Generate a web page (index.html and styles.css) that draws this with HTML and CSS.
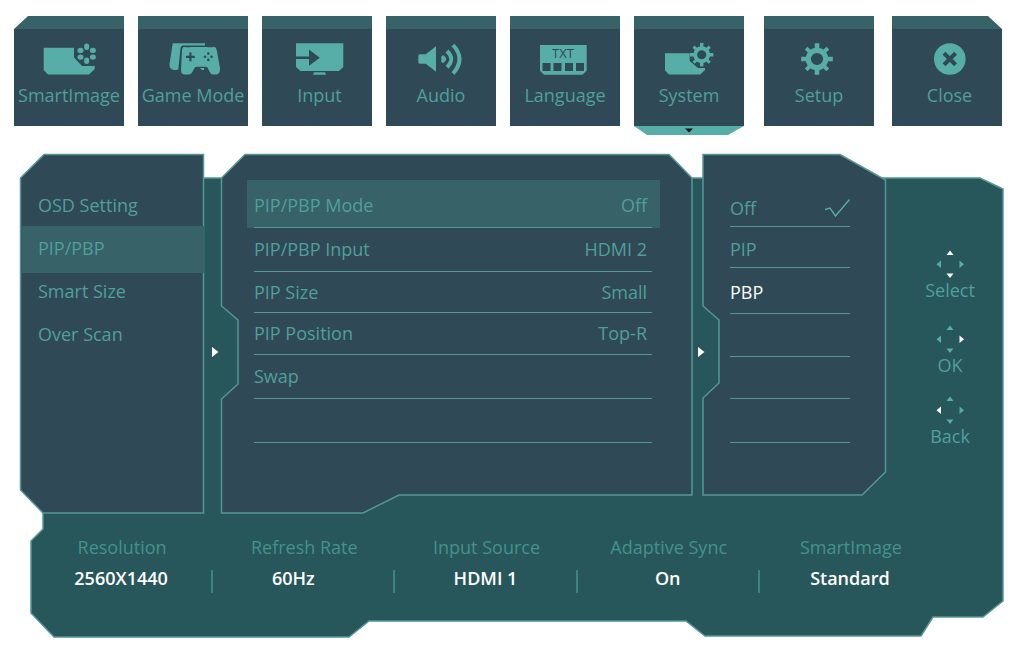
FILE: index.html
```html
<!DOCTYPE html>
<html lang="en">
<head>
<meta charset="utf-8">
<meta name="viewport" content="width=device-width, initial-scale=1">
<title>Monitor OSD</title>
<link rel="stylesheet" href="styles.css">
</head>
<body>
<svg class="defs" aria-hidden="true">
  <symbol id="gear" viewBox="-16 -16 32 32">
    <circle r="8.7" fill="none" stroke="currentColor" stroke-width="5.2"/>
    <path fill="currentColor" d="M-2.3-15.8H2.3V-10H-2.3zM-2.3 10H2.3V15.8H-2.3zM-15.8-2.3H-10V2.3H-15.8zM10-2.3H15.8V2.3H10z"/>
    <path fill="currentColor" transform="rotate(45)" d="M-2-15.3H2V-10H-2zM-2 10H2V15.3H-2zM-15.3-2H-10V2H-15.3zM10-2H15.3V2H10z"/>
  </symbol>
</svg>
<main class="osd">
  <nav class="tabs" aria-label="Main menu">
    <button class="tab tab-first" type="button">
      <svg class="tab-icon" viewBox="0 0 60 34" aria-hidden="true">
        <path d="M4.7 5.7H35V15.5L43 24H55.7V27L50 32.5H9L4.7 28z"/>
        <ellipse cx="47.7" cy="4.7" rx="2.6" ry="3.2"/><ellipse cx="47.7" cy="18.8" rx="2.6" ry="3.2"/>
        <ellipse cx="41.5" cy="8.4" rx="3" ry="2.6"/><ellipse cx="41.5" cy="15.1" rx="3" ry="2.6"/>
        <ellipse cx="53.9" cy="8.4" rx="3" ry="2.6"/><ellipse cx="53.9" cy="15.1" rx="3" ry="2.6"/>
      </svg>
      <span class="tab-label">SmartImage</span>
    </button>
    <button class="tab" type="button">
      <svg class="tab-icon" viewBox="0 0 60 34" aria-hidden="true">
        <path d="M9.7 1.3H42V3.4H20Q17.8 3.4 17.5 6L15.3 27.5Q12 28.6 9 27.5Q6.2 26 6.5 22z"/>
        <path d="M21 4.7Q24 5.7 28 4.9H44Q48 5.7 51 4.7Q53.3 5 53.7 8L57 26Q57.4 32 53.5 32.4H50Q47.5 32.4 46.5 29.5L44.5 25.5Q43.8 24.7 42.5 24.7H33.5Q32.2 24.7 31.3 26.2L29.5 29.8Q28.3 32.4 26 32.4H21Q17.8 32 18 27.5L19 8Q19.2 5 21 4.7z"/>
        <path d="M37 26H41V28H39z"/>
        <path class="cut" d="M26.3 10.4h2.2v3.3h3.3v2.2h-3.3v3.3h-2.2v-3.3H23v-2.2h3.3z"/>
        <circle class="cut" cx="45.3" cy="11.5" r="1.3"/><circle class="cut" cx="45.3" cy="17.9" r="1.3"/>
        <circle class="cut" cx="42" cy="14.7" r="1.3"/><circle class="cut" cx="48.6" cy="14.7" r="1.3"/>
      </svg>
      <span class="tab-label">Game Mode</span>
    </button>
    <button class="tab" type="button">
      <svg class="tab-icon" viewBox="0 0 60 34" aria-hidden="true">
        <path d="M9 1.3H56.3V25L52 29H13.5L9 25z"/>
        <path d="M27 30.2H38L39 32.7H26z"/>
        <path class="cut" d="M9 14.5H22V7.5L32.8 15.8L22 23.8V17H9z"/>
      </svg>
      <span class="tab-label label-inset">Input</span>
    </button>
    <button class="tab" type="button">
      <svg class="tab-icon" viewBox="0 0 60 34" aria-hidden="true">
        <path d="M8.5 12.3H14.7L25 4.3V29.7L14.7 21.7H8.5L7.3 20.5V13.5z"/>
        <path d="M32 13Q38.5 17 32 21.3L30 19.5Q31 17 30 15z"/>
        <path class="wave" d="M36 9Q44.5 17 36 25.3M42 3Q55 17 42 31.5"/>
      </svg>
      <span class="tab-label">Audio</span>
    </button>
    <button class="tab" type="button">
      <svg class="tab-icon" viewBox="0 0 60 34" aria-hidden="true">
        <path d="M5 3H51.7V28.7L47.5 32.7H9L5 28.7z"/>
        <text class="txt" x="28" y="16" text-anchor="middle">TXT</text>
        <path class="cut" d="M7.5 21h8v8h-8zM18.5 21h8v8h-8zM30 21h8v8h-8zM41 21h8v8h-8z"/>
      </svg>
      <span class="tab-label">Language</span>
    </button>
    <button class="tab tab-active" type="button" aria-current="page">
      <svg class="tab-icon" viewBox="0 0 60 34" aria-hidden="true">
        <path d="M6 11.3H30.7V19L39 26H46V28L41.3 32.5H10L6 28.5z"/>
        <use href="#gear" x="30.7" y="0.7" width="24" height="24"/>
      </svg>
      <span class="tab-label">System</span>
      <svg class="tab-marker" viewBox="0 0 110 9" preserveAspectRatio="none" aria-hidden="true">
        <path d="M0 0H110L94 9H13z"/><path class="marker-arrow" d="M51 2.5H59L55 6.5z"/>
      </svg>
    </button>
    <button class="tab tab-setup" type="button">
      <svg class="tab-icon" viewBox="0 0 60 34" aria-hidden="true">
        <use href="#gear" x="12" y="1" width="32" height="32"/>
      </svg>
      <span class="tab-label">Setup</span>
    </button>
    <button class="tab tab-last" type="button">
      <svg class="tab-icon" viewBox="0 0 60 34" aria-hidden="true">
        <circle cx="32.8" cy="17" r="15.8"/>
        <path class="cross" d="M27 11.3L38.6 22.7M38.6 11.3L27 22.7"/>
      </svg>
      <span class="tab-label label-inset">Close</span>
    </button>
  </nav>

  <section class="menu" aria-label="System">
    <svg class="shape frame" viewBox="20 154 984 484" preserveAspectRatio="none" aria-hidden="true">
      <path d="M190 178H980L1003 189V601L983 617H933L921 636H705L686 621H369L349 637H54L31 613V541L43 529V500H190z"/>
    </svg>
    <div class="panels">
      <nav class="panel sections" aria-label="System settings">
        <svg class="shape" viewBox="20 154 184 359" preserveAspectRatio="none" aria-hidden="true">
          <path d="M44 154.5H203.5V513H43L20.5 490V178z"/>
        </svg>
        <button class="section" type="button">OSD Setting</button>
        <button class="section section-active" type="button" aria-current="true">PIP/PBP</button>
        <button class="section" type="button">Smart Size</button>
        <button class="section" type="button">Over Scan</button>
      </nav>
      <div class="joint" aria-hidden="true"><svg viewBox="0 0 7 10"><path d="M0 0L6.5 5L0 10z"/></svg></div>
      <div class="panel settings">
        <svg class="shape" viewBox="221 154 472 359" preserveAspectRatio="none" aria-hidden="true">
          <path d="M245 154.5H669L692 178V495H399L363 513H221.5V399L238 384V320L221.5 306V178z"/>
        </svg>
        <button class="setting setting-active" type="button"><span>PIP/PBP Mode</span><span>Off</span></button>
        <button class="setting" type="button"><span>PIP/PBP Input</span><span>HDMI 2</span></button>
        <button class="setting" type="button"><span>PIP Size</span><span>Small</span></button>
        <button class="setting" type="button"><span>PIP Position</span><span>Top-R</span></button>
        <button class="setting" type="button"><span>Swap</span></button>
        <div class="setting"></div>
      </div>
      <div class="joint joint-narrow" aria-hidden="true"><svg viewBox="0 0 7 10"><path d="M0 0L6.5 5L0 10z"/></svg></div>
      <div class="panel options">
        <svg class="shape" viewBox="703 154 183 341" preserveAspectRatio="none" aria-hidden="true">
          <path d="M703 154.5H840L885.5 180V472L862 495H703V398L719 383V320L703 306z"/>
        </svg>
        <button class="option" type="button"><span>Off</span>
          <svg class="check" viewBox="0 0 25 18" role="img" aria-label="Selected"><path d="M0 10.5L5 9L10.5 17L24.5 0.5"/></svg>
        </button>
        <button class="option" type="button"><span>PIP</span></button>
        <button class="option option-focus" type="button"><span>PBP</span></button>
        <div class="option"></div>
        <div class="option"></div>
        <div class="option"></div>
      </div>
      <ul class="hints">
        <li class="hint">
          <svg viewBox="0 0 28 28" aria-hidden="true"><path class="on" d="M10.5 5L14 .5L17.5 5zM10.5 23.5H17.5L14 28z"/><path d="M5 10.5V18L.5 14.2zM23.5 10.5V18L28 14.2z"/></svg>
          <span>Select</span>
        </li>
        <li class="hint hint-ok">
          <svg viewBox="0 0 28 28" aria-hidden="true"><path d="M10.5 5L14 .5L17.5 5zM10.5 23.5H17.5L14 28zM5 10.5V18L.5 14.2z"/><path class="on" d="M23.5 10.5V18L28 14.2z"/></svg>
          <span>OK</span>
        </li>
        <li class="hint">
          <svg viewBox="0 0 28 28" aria-hidden="true"><path d="M10.5 5L14 .5L17.5 5zM10.5 23.5H17.5L14 28zM23.5 10.5V18L28 14.2z"/><path class="on" d="M5 10.5V18L.5 14.2z"/></svg>
          <span>Back</span>
        </li>
      </ul>
    </div>
    <dl class="stats">
      <div class="stat"><dt>Resolution</dt><dd>2560X1440</dd></div>
      <div class="stat stat-rate"><dt>Refresh Rate</dt><dd>60Hz</dd></div>
      <div class="stat"><dt>Input Source</dt><dd>HDMI 1</dd></div>
      <div class="stat"><dt>Adaptive Sync</dt><dd>On</dd></div>
      <div class="stat"><dt>SmartImage</dt><dd>Standard</dd></div>
    </dl>
  </section>
</main>
</body>
</html>
```
FILE: styles.css
```css
:root {
  --navy: #2f4a56;
  --band: #366268;
  --frame: #27575b;
  --line: #559796;
  --text: #519f9b;
  --label: #45918b;
  --icon: #57ada8;
}

* { box-sizing: border-box; }

body {
  margin: 0;
  background: #fff;
  color: var(--text);
  font: 18px/24px "Open Sans", "Noto Sans", sans-serif;
}

button {
  margin: 0;
  padding: 0;
  border: 0;
  background: none;
  color: inherit;
  font: inherit;
  text-align: left;
  cursor: pointer;
}

.defs { position: absolute; width: 0; height: 0; }

.osd { padding: 16px 0 14px; }

/* Top tabs */
.tabs {
  display: flex;
  gap: 14px;
  padding: 0 22px 0 14px;
}

.tab {
  position: relative;
  display: flex;
  flex: 1 1 0;
  flex-direction: column;
  align-items: center;
  gap: 7px;
  min-width: 0;
  padding: 26px 0 19px;
  background: linear-gradient(var(--band) 13px, var(--navy) 13px);
  white-space: nowrap;
}

.tab-first { clip-path: polygon(14px 0, 100% 0, 100% 100%, 0 100%, 0 13px); }
.tab-last { margin-left: 4px; clip-path: polygon(0 0, calc(100% - 14px) 0, 100% 13px, 100% 100%, 0 100%); }
.tab-setup { margin-left: 6px; }
.label-inset { padding-left: 5px; }

.tab-icon { width: 60px; height: 34px; color: var(--icon); fill: var(--icon); }
.tab-icon .cut { fill: var(--navy); }
.tab-icon .wave { fill: none; stroke: var(--icon); stroke-width: 4; }
.tab-icon .cross { fill: none; stroke: var(--navy); stroke-width: 4; }
.tab-icon .txt { fill: var(--navy); font-size: 13px; }

.tab-marker {
  position: absolute;
  top: 100%;
  left: 0;
  width: 100%;
  height: 9px;
  fill: var(--icon);
}
.tab-marker .marker-arrow { fill: #0b1416; }

/* Menu body */
.menu {
  position: relative;
  margin: 28px 20px 0;
}

.shape {
  position: absolute;
  inset: 0;
  z-index: -1;
  width: 100%;
  height: 100%;
  overflow: visible;
}
.shape path {
  fill: var(--navy);
  stroke: var(--line);
  stroke-width: 1.5px;
  vector-effect: non-scaling-stroke;
}
.frame path { fill: var(--frame); }

.panels {
  display: grid;
  grid-template-columns: 184fr 17fr 472fr 10fr 183fr 118fr;
}

.panel {
  position: relative;
  z-index: 0;
  display: grid;
  align-content: start;
}

.sections { padding: 29px 0 0 2px; }
.section {
  height: 43px;
  padding: 0 16px;
}
.section-active {
  height: 47px;
  margin-bottom: -4px;
  padding-bottom: 4px;
  background: var(--band);
}

.joint {
  z-index: 1;
  align-self: center;
  min-width: 0;
  padding: 36px 0 0 8px;
}
.joint-narrow { padding-left: 5px; }
.joint svg { display: block; width: 7px; height: 10px; }
.joint path { fill: #fff; }
.joint-narrow { width: 12px; margin-right: -2px; }

.settings {
  grid-template-rows: 48px 44px 41px 42px 44px 44px;
  padding: 26px 41px 70px 33px;
}
.setting {
  display: flex;
  align-items: center;
  justify-content: space-between;
  padding: 0 5px 1px 0;
  border-bottom: 1px solid var(--line);
}
.setting-active {
  margin: 0 -8px 0 -7px;
  padding: 2px 13px 0 7px;
  border-bottom: 0;
  background: linear-gradient(var(--line), var(--line)) 7px 100% / calc(100% - 15px) 1px no-repeat, var(--band);
}

.options {
  grid-template-rows: 40px 41px 46px 43px 42px 44px;
  align-self: start;
  padding: 33px 36px 52px 27px;
}
.option {
  display: flex;
  align-items: center;
  justify-content: space-between;
  padding-top: 3px;
  border-bottom: 1px solid var(--line);
}
.option-focus { color: #fff; }
.check { width: 25px; height: 18px; fill: none; stroke: var(--icon); stroke-width: 1.4; }

.hints {
  display: flex;
  flex-direction: column;
  align-items: center;
  gap: 20px;
  margin: 0;
  padding: 96px 0 0 10px;
  line-height: 22px;
  list-style: none;
}
.hint { display: flex; flex-direction: column; align-items: center; gap: 1px; }
.hint-ok { margin-top: 4px; }
.hint svg { width: 28px; height: 28px; fill: var(--icon); }
.hint .on { fill: #fff; }

/* Status line */
.stats {
  display: grid;
  grid-template-columns: repeat(5, 1fr);
  margin: 0;
  padding: 22px 62px 45px 11px;
  text-align: center;
}
.stat dt { color: var(--label); }
.stat dd {
  margin: 11px 0 0;
  padding-bottom: 7px;
  border-right: 2px solid #3f837f;
  color: #fff;
  font-weight: 600;
  line-height: 16px;
}
.stat:last-child dd { border-right-color: transparent; }
.stat-rate dd { padding-right: 20px; }
```
